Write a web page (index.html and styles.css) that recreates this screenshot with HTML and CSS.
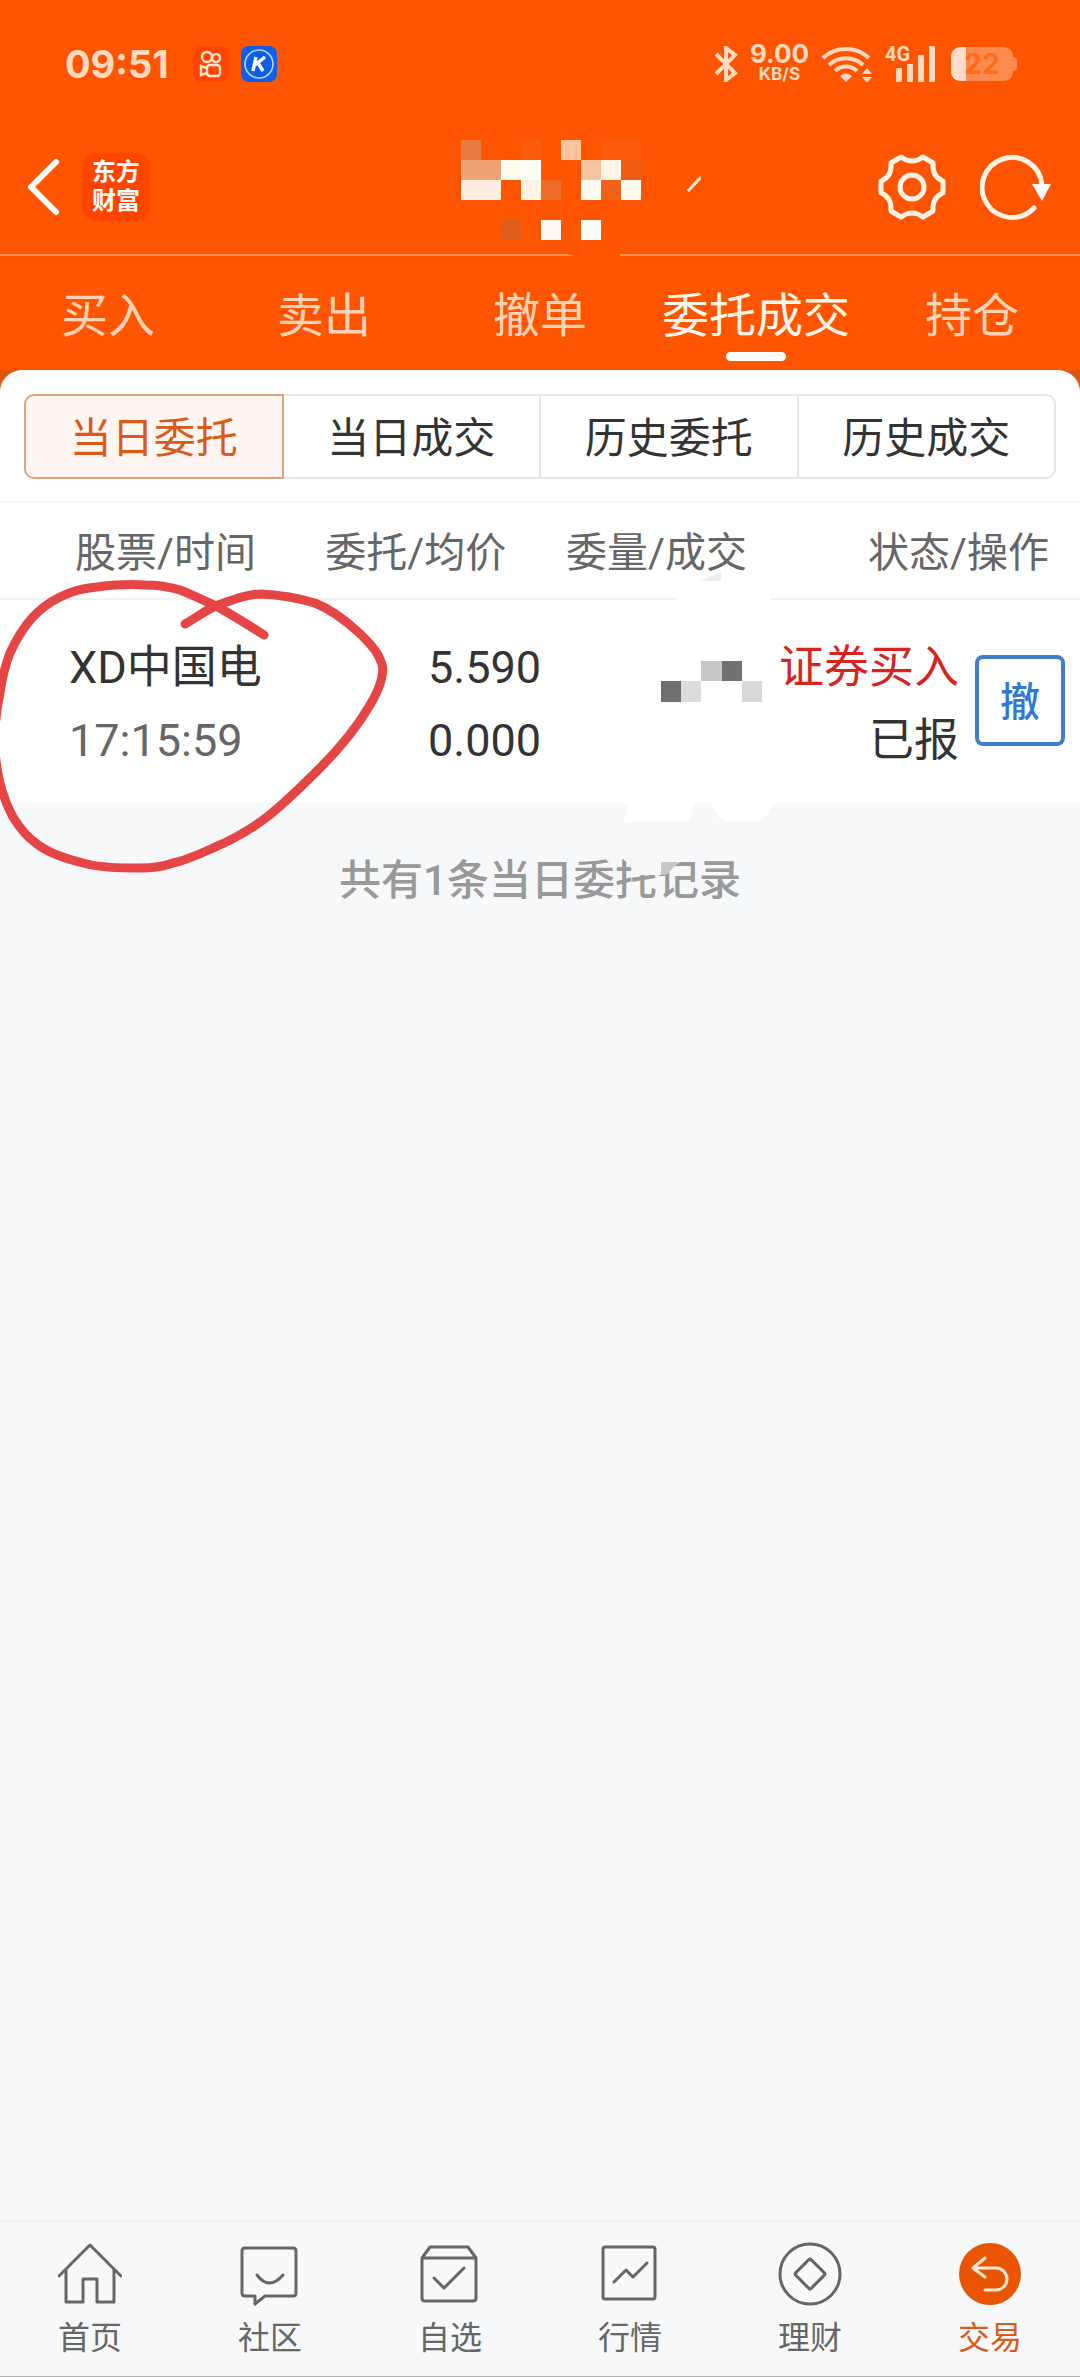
FILE: index.html
```html
<!DOCTYPE html>
<html lang="zh-CN">
<head>
    <meta charset="UTF-8">
    <meta name="viewport" content="width=device-width, initial-scale=1.0">
    <title>委托成交</title>
    <link rel="stylesheet" href="styles.css">
</head>
<body>
    <!-- 状态栏 -->
    <div class="status-bar">
        <span class="clock">09:51</span>
        <svg class="app-icon" width="36" height="36" viewBox="0 0 36 36" fill="none" stroke="#ffe3d2" stroke-width="2.4">
            <rect width="36" height="36" rx="8" fill="#ff4500" stroke="none"/>
            <circle cx="14" cy="11" r="5"/>
            <circle cx="23" cy="12" r="4"/>
            <rect x="14" y="19" width="13" height="11" rx="3"/>
            <path d="M14 22l-6-2v9l6-2"/>
        </svg>
        <svg class="app-icon" width="36" height="36" viewBox="0 0 36 36" fill="none" stroke="#fff">
            <rect width="36" height="36" rx="8" fill="#0d5fe8" stroke="none"/>
            <circle cx="18" cy="18" r="14" stroke-width="1.6" stroke="#b9d4ff"/>
            <path d="M15 11l-3 14M24 11l-10 8M17 17l5 8" stroke-width="3.4"/>
        </svg>
        <div class="status-right">
            <svg width="24" height="36" viewBox="0 0 24 36" fill="none" stroke="#ffd9c0" stroke-width="4">
                <path d="M2 8l19 19-9 7V2l9 7L2 28"/>
            </svg>
            <div class="speed"><span class="speed-num">9.00</span><span class="speed-unit">KB/S</span></div>
            <svg width="52" height="36" viewBox="0 0 52 36" fill="none" stroke="#ffd9c0" stroke-width="4">
                <path d="M2 12a34 34 0 0 1 46 0M8 19a25 25 0 0 1 34 0M14 25a16 16 0 0 1 22 0"/>
                <path d="M25 36l-6-6q6-5 12 0z M41 28l5-6 5 6z M41 31l5 6 5-6z" fill="#ffd9c0" stroke="none"/>
            </svg>
            <div class="signal">
                <span class="net">4G</span>
                <svg width="40" height="36" viewBox="0 0 40 36" fill="#ffd9c0">
                    <rect x="1" y="22" width="6" height="14" rx="1"/>
                    <rect x="12" y="18" width="6" height="18" rx="1"/>
                    <rect x="23" y="9" width="6" height="27" rx="1"/>
                    <rect x="34" y="0" width="6" height="36" rx="1"/>
                </svg>
            </div>
            <div class="battery">22</div>
        </div>
    </div>

    <!-- 标题栏 -->
    <header class="title-bar">
        <div class="title-left">
            <button class="icon-btn" aria-label="返回">
                <svg width="34" height="58" viewBox="0 0 34 58" fill="none" stroke="#fff" stroke-width="6" stroke-linecap="round" stroke-linejoin="round">
                    <path d="M28 4L3 29l25 25"/>
                </svg>
            </button>
            <div class="logo">东方<br>财富</div>
        </div>
        <svg class="account" width="322" height="170" viewBox="379 86 322 170">
            <path d="M461 140h20v20h-20z" fill="#e87c40"/>
            <path d="M521 140h20v20h-20zM601 140h40v20h-40z" fill="#fb5b0a"/>
            <path d="M561 140h20v20h-20z" fill="#ffc39e"/>
            <path d="M461 160h40v20h-40z" fill="#f0a274"/>
            <path d="M501 160h20v20h-20z" fill="#fffbef"/>
            <path d="M521 160h20v20h-20z" fill="#fffff8"/>
            <path d="M581 160h20v20h-20z" fill="#f8c39f"/>
            <path d="M601 160h20v20h-20z" fill="#fff5e5"/>
            <path d="M621 160h20v20h-20z" fill="#ef5b12"/>
            <path d="M461 180h40v20h-40z" fill="#ffeedf"/>
            <path d="M521 180h20v20h-20z" fill="#fff5e3"/>
            <path d="M541 180h20v20h-20z" fill="#f06c2a"/>
            <path d="M581 180h20v20h-20zM621 180h20v20h-20z" fill="#fffbee"/>
            <path d="M601 180h20v20h-20z" fill="#f3601a"/>
            <path d="M501 220h20v20h-20z" fill="#dc5c18"/>
            <path d="M541 220h20v20h-20z" fill="#fff7f0"/>
            <path d="M581 220h20v20h-20z" fill="#fff"/>
            <path d="M564 253h56v4h-42z" fill="#ff5500"/>
            <path d="M561 241h20v14q-14 0-20-4z" fill="#f95400"/>
            <path d="M688 191l13-14" stroke="#ffe9d6" stroke-width="3"/>
        </svg>
        <div class="title-right">
            <button class="icon-btn" aria-label="设置">
                <svg width="68" height="68" viewBox="0 0 68 68" fill="none" stroke="#fff3e6" stroke-width="5" stroke-linejoin="round">
                    <path d="M23 4q11 8 22 0l10 6q-1 14 10 18v12q-11 4-10 18l-10 6q-11-8-22 0l-10-6q1-14-10-18V28q11-4 10-18z"/>
                    <circle cx="34" cy="34" r="12"/>
                </svg>
            </button>
            <button class="icon-btn" aria-label="刷新">
                <svg width="72" height="68" viewBox="0 0 72 68" fill="none" stroke="#fff3e6" stroke-width="5" stroke-linecap="round">
                    <path d="M62 32a30 30 0 1 0-8 23"/>
                    <path d="M52 31h19l-9 17z" fill="#fff" stroke="none"/>
                </svg>
            </button>
        </div>
    </header>

    <nav class="main-tabs">
        <a href="#">买入</a>
        <a href="#">卖出</a>
        <a href="#">撤单</a>
        <a href="#" class="active">委托成交</a>
        <a href="#">持仓</a>
    </nav>

    <main class="sheet-wrap">
        <div class="sheet">
            <div class="segments">
                <button class="active">当日委托</button>
                <button>当日成交</button>
                <button>历史委托</button>
                <button>历史成交</button>
            </div>
            <!-- 委托列表 -->
            <div class="orders">
                <table>
                    <colgroup>
                        <col class="col-stock"><col class="col-price"><col class="col-amount"><col class="col-status"><col class="col-action">
                    </colgroup>
                    <thead>
                        <tr>
                            <th class="head-stock">股票/时间</th>
                            <th>委托/均价</th>
                            <th>委量/成交</th>
                            <th class="head-status" colspan="2">状态/操作</th>
                        </tr>
                    </thead>
                    <tbody>
                        <tr>
                            <td class="stock">XD中国电<br><span class="time">17:15:59</span></td>
                            <td class="num">5.590<br>0.000</td>
                            <td></td>
                            <td class="num"><span class="buy">证券买入</span><br>已报</td>
                            <td class="action"><button class="cancel">撤</button></td>
                        </tr>
                    </tbody>
                </table>
                <p class="summary">共有1条当日委托记录</p>
                <!-- 数量打码 -->
                <svg class="mask" width="160" height="310" viewBox="616 570 160 310">
                    <path d="M677 596h93v5h-93z" fill="#fff"/>
                    <path d="M721 572v9h-21z" fill="#f0ebf0"/>
                    <path d="M701 661h21v20h-21z" fill="#c6c6c6"/>
                    <path d="M722 661h20v20h-20z" fill="#737074"/>
                    <path d="M661 681h20v21h-20z" fill="#6c6f6a"/>
                    <path d="M681 681h20v21h-20z" fill="#dedbdf"/>
                    <path d="M742 681h20v21h-20z" fill="#d8d8d8"/>
                    <path d="M628 802h67l-5 20h-66zM711 802h62q-5 15-15 20h-32q-11-5-15-20z" fill="#fff"/>
                    <path d="M624 822h66q0 26-10 40l-18 13h-22l-16-15q-5-20 0-38z" fill="#f7f7f7"/>
                    <path d="M661 862h18l-13 13h-5z" fill="#c8c6c9"/>
                </svg>
                <!-- 手绘圈注 -->
                <svg class="circle-mark" width="400" height="310" viewBox="0 570 400 310" fill="none" stroke="#e64545" stroke-width="9" stroke-linecap="round" stroke-linejoin="round">
                    <path d="M185 624C197 617 206 610 218 605C235 599 248 594 262 594C280 595 298 598 315 603C332 610 345 620 357 631C366 639 374 648 378 655C382 663 384 668 382 676C381 684 375 697 370 705C356 729 338 750 320 768C303 785 285 803 267 817C250 830 230 841 213 848C200 854 187 860 173 863C162 867 151 868 140 868C120 868 101 868 83 863C67 859 48 853 37 844C27 837 19 827 13 817C7 806 3 795 0 783C-7 755-7 725 0 693C2 678 5 666 10 653C16 640 23 628 32 618C40 609 50 602 60 597C72 591 84 588 97 587C113 585 130 584 145 585C157 585 170 587 180 590C193 595 205 601 218 607C234 616 250 626 264 635"/>
                </svg>
            </div>
        </div>
    </main>

    <nav class="bottom-nav">
        <a href="#">
            <svg width="64" height="64" viewBox="0 0 64 64">
                <path d="M1 34L32 3l31 31M8 28v32h17V37h14v23h17V28"/>
            </svg>
            首页
        </a>
        <a href="#">
            <svg width="64" height="64" viewBox="0 0 64 64">
                <path d="M7 6h48q3 0 3 3v42q0 3-3 3H27l-10 8v-8H7q-3 0-3-3V9q0-3 3-3z"/>
                <path d="M19 33q12 16 26 0"/>
            </svg>
            社区
        </a>
        <a href="#">
            <svg width="64" height="64" viewBox="0 0 64 64">
                <path d="M4 16l8-11h38l8 11v40q0 3-3 3H7q-3 0-3-3zM4 16h54M16 36l10 10 20-20"/>
            </svg>
            自选
        </a>
        <a href="#">
            <svg width="64" height="64" viewBox="0 0 64 64">
                <rect x="5" y="5" width="52" height="52" rx="2"/>
                <path d="M16 40l12-12 7 7 14-14"/>
            </svg>
            行情
        </a>
        <a href="#">
            <svg width="64" height="64" viewBox="0 0 64 64">
                <circle cx="32" cy="32" r="30"/>
                <rect x="21" y="21" width="22" height="22" rx="2" transform="rotate(45 32 32)"/>
            </svg>
            理财
        </a>
        <a href="#" class="active">
            <svg width="64" height="64" viewBox="0 0 64 64">
                <circle class="disc" cx="32" cy="32" r="31"/>
                <path d="M27 16L15 26l12 9M15 26h23a11 11 0 0 1 0 22H27"/>
            </svg>
            交易
        </a>
    </nav>
</body>
</html>
```

FILE: styles.css
```css
* { box-sizing: border-box; }
body {
    margin: 0;
    min-height: 100vh;
    display: flex;
    flex-direction: column;
    background: #f6f8fa;
    color: #333;
    font-family: Roboto, "Noto Sans CJK SC", sans-serif;
}
a { text-decoration: none; }
button { font-family: inherit; padding: 0; cursor: pointer; }
svg { display: block; flex-shrink: 0; }

/* 状态栏 */
.status-bar {
    height: 86px;
    padding: 42px 65px 0 65px;
    display: flex;
    align-items: center;
    background: #ff5500;
    color: #ffd9c0;
    font-family: Inter, sans-serif;
    font-weight: 700;
}
.clock { font-size: 38px; line-height: 40px; margin-right: 24px; }
.app-icon { margin-right: 12px; }
.status-right { margin-left: auto; display: flex; align-items: center; gap: 12px; }
.speed { display: flex; flex-direction: column; align-items: center; }
.speed-num { font-size: 26px; line-height: 20px; }
.speed-unit { font-size: 17px; line-height: 20px; }
.signal { position: relative; padding-left: 10px; }
.net { position: absolute; left: 0; top: 0; font-size: 20px; line-height: 16px; font-family: Roboto, sans-serif; }
.battery {
    position: relative;
    width: 62px;
    height: 34px;
    margin: 0 2px 0 4px;
    border-radius: 9px;
    background: linear-gradient(to right, #ffdccb 15px, #ff8a4d 15px);
    color: #ff6a1c;
    font-size: 28px;
    line-height: 34px;
    text-align: center;
}
.battery::after {
    content: "";
    position: absolute;
    left: 62px;
    top: 10px;
    width: 4px;
    height: 14px;
    border-radius: 0 4px 4px 0;
    background: #ff8a4d;
}

/* 标题栏 */
.title-bar {
    height: 170px;
    padding: 0 28px;
    display: grid;
    grid-template-columns: 1fr auto 1fr;
    align-items: center;
    background: #ff5500;
    border-bottom: 2px solid #ff8e52;
}
.title-left { display: flex; align-items: center; gap: 20px; padding-top: 34px; }
.title-right { display: flex; align-items: center; justify-content: flex-end; gap: 34px; padding-top: 34px; }
.account { margin-bottom: -2px; }
.icon-btn { border: none; background: none; }
.logo {
    width: 68px;
    height: 68px;
    padding-top: 5px;
    border-radius: 14px;
    background: #ff4500;
    color: #fff;
    font-size: 24px;
    font-weight: 700;
    line-height: 29px;
    text-align: center;
}

.main-tabs { height: 114px; display: flex; background: #ff5500; }
.main-tabs a {
    flex: 1 1 0;
    display: flex;
    flex-direction: column;
    align-items: center;
    padding-top: 32px;
    color: #ffd3b5;
    font-size: 47px;
    line-height: 56px;
    white-space: nowrap;
}
.main-tabs .active { color: #fff7ec; }
.main-tabs .active::after {
    content: "";
    width: 60px;
    height: 9px;
    margin-top: 8px;
    border-radius: 5px;
    background: #fff;
}

.sheet-wrap { background: linear-gradient(#dc570c 24px, transparent 24px); }
.sheet { padding-top: 24px; background: #fff; border-radius: 22px 22px 0 0; }
.segments { display: flex; margin: 0 24px 22px; }
.segments button {
    flex: 1 1 0;
    height: 85px;
    padding-bottom: 4px;
    border: 2px solid #e3e6e8;
    border-left-width: 0;
    background: #fff;
    color: #333;
    font-size: 42px;
}
.segments button:first-child { border-left-width: 2px; border-radius: 10px 0 0 10px; }
.segments button:last-child { border-radius: 0 10px 10px 0; }
.segments .active { border-color: #d9a581; background: #fff5f1; color: #d95b1a; }

/* 委托列表 */
.orders { position: relative; }
table { width: 100%; table-layout: fixed; border-collapse: collapse; }
.col-stock { width: 27.8%; }
.col-price { width: 22.3%; }
.col-amount { width: 21.2%; }
.col-status { width: 17.5%; }
.col-action { width: 11.2%; }
th {
    height: 97px;
    padding: 0 0 3px 25px;
    border-top: 2px solid #f5f6f7;
    border-bottom: 2px solid #f3f3f4;
    color: #666;
    font-size: 41px;
    font-weight: 400;
    text-align: left;
    white-space: nowrap;
}
.head-stock { padding-left: 75px; }
.head-status { padding: 0 31px 3px 0; text-align: right; }
td { padding: 31px 0 26px; font-size: 45px; line-height: 73px; white-space: nowrap; }
.stock { padding-left: 69px; }
.time { color: #666; }
.num { text-align: right; }
.buy { color: #d8241f; }
.action { padding: 26px 0 28px 16px; vertical-align: middle; }
.cancel {
    display: block;
    width: 90px;
    height: 91px;
    padding-bottom: 4px;
    border: 4px solid #3f7fc9;
    border-radius: 8px;
    background: #fff;
    color: #2f78d4;
    font-size: 40px;
    font-weight: 500;
}
.summary {
    margin: 0;
    padding-top: 52px;
    background: #f6f8fa;
    color: #999;
    font-size: 42px;
    font-weight: 500;
    line-height: 52px;
    text-align: center;
}
.mask { position: absolute; left: 616px; top: 69px; }
.circle-mark { position: absolute; left: 0; top: 69px; }

/* 底部导航 */
.bottom-nav {
    height: 157px;
    margin-top: auto;
    display: flex;
    background: #f7f8fa;
    border-top: 2px solid #eff1f2;
    border-bottom: 1px solid #b0b0b0;
}
.bottom-nav a {
    flex: 1;
    display: flex;
    flex-direction: column;
    align-items: center;
    padding-top: 20px;
    gap: 12px;
    color: #666;
    font-size: 32px;
    line-height: 40px;
}
.bottom-nav svg { fill: none; stroke: #666; stroke-width: 3; stroke-linecap: round; stroke-linejoin: round; }
.bottom-nav .active { color: #d95b1a; }
.bottom-nav .active svg { stroke: #ffe9d6; }
.disc { fill: #ea5504; stroke: none; }
```
